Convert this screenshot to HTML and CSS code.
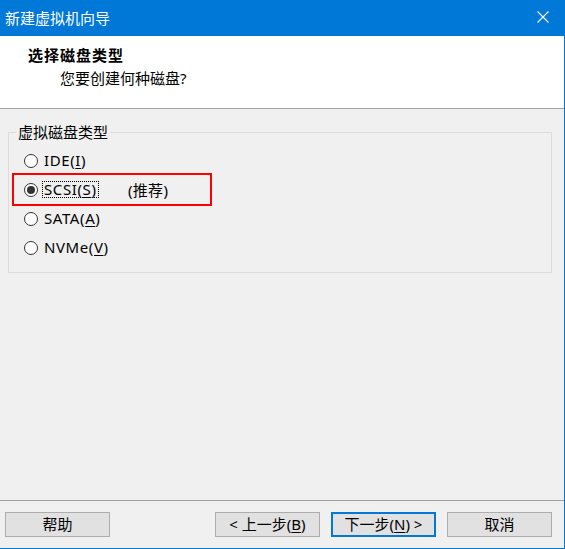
FILE: index.html
```html
<!DOCTYPE html>
<html lang="zh-CN">
<head>
<meta charset="utf-8">
<title>新建虚拟机向导</title>
<link rel="stylesheet" href="styles.css">
</head>
<body>
<div class="window">
  <div class="titlebar">
    <span class="title">新建虚拟机向导</span>
    <svg class="close" width="12" height="12" viewBox="0 0 12 12" aria-hidden="true">
      <path d="M0.5 0.5 L11.5 11.5 M11.5 0.5 L0.5 11.5" stroke="#fff" stroke-width="1.1" fill="none"/>
    </svg>
  </div>
  <div class="header">
    <div class="h-title">选择磁盘类型</div>
    <div class="h-sub">您要创建何种磁盘?</div>
  </div>
  <div class="content">
    <fieldset class="group">
      <legend>虚拟磁盘类型</legend>
      <div class="row">
        <span class="opt"><span class="radio"></span><span class="label">IDE(<u>I</u>)</span></span>
      </div>
      <div class="row row-hl">
        <span class="opt opt-fixed"><span class="radio checked"></span><span class="label focus">SCSI(<u>S</u>)</span></span>
        <span class="rec">(推荐)</span>
        <span class="highlight"></span>
      </div>
      <div class="row">
        <span class="opt"><span class="radio"></span><span class="label">SATA(<u>A</u>)</span></span>
      </div>
      <div class="row">
        <span class="opt"><span class="radio"></span><span class="label">NVMe(<u>V</u>)</span></span>
      </div>
    </fieldset>
  </div>
  <div class="footer">
    <button class="btn">帮助</button>
    <button class="btn btn-back">&lt; 上一步(<u>B</u>)</button>
    <button class="btn btn-primary">下一步(<u>N</u>) &gt;</button>
    <button class="btn">取消</button>
  </div>
</div>
</body>
</html>
```
FILE: styles.css
```css
* { box-sizing: border-box; }
html, body {
  margin: 0;
  padding: 0;
  background: #f0f0f0;
}
body {
  font-family: "Noto Sans", "Noto Sans CJK SC", sans-serif;
  font-size: 15px;
  color: #000;
}
.window {
  width: 565px;
  height: 549px;
  display: flex;
  flex-direction: column;
  background: #f0f0f0;
  border-right: 1px solid #0078d7;
  border-bottom: 1px solid #0078d7;
}
.titlebar {
  height: 36px;
  flex: none;
  background: #0078d7;
  display: flex;
  align-items: flex-start;
  padding-left: 5px;
  padding-right: 15px;
}
.title {
  color: #fff;
  font-size: 15px;
  line-height: 36px;
  flex: 1;
}
.close {
  margin-top: 11px;
  display: block;
}
.header {
  height: 73px;
  flex: none;
  background: #fff;
  border-bottom: 1px solid #a0a0a0;
  padding-top: 9px;
}
.h-title {
  font-weight: bold;
  font-size: 15px;
  line-height: 20px;
  letter-spacing: 1px;
  padding-left: 28px;
}
.h-sub {
  font-size: 15px;
  line-height: 20px;
  margin-top: 3px;
  padding-left: 60px;
}
.content {
  flex: 1;
  padding-top: 13px;
  padding-left: 8px;
}
.group {
  margin: 0;
  width: 544px;
  height: 151px;
  border: 1px solid #dcdcdc;
  padding: 4px 0 0 7px;
  min-width: 0;
}
.group legend {
  padding: 0 2px;
  font-size: 15px;
  line-height: 20px;
}
.row {
  height: 29px;
  display: flex;
  align-items: center;
  position: relative;
  padding-left: 8px;
}
.opt {
  display: flex;
  align-items: center;
}
.opt-fixed {
  width: 104px;
}
.radio {
  width: 14px;
  height: 14px;
  min-width: 14px;
  border-radius: 50%;
  border: 1px solid #333;
  background: #fff;
  flex: none;
  display: flex;
  align-items: center;
  justify-content: center;
}
.radio.checked::after {
  content: "";
  width: 8px;
  height: 8px;
  border-radius: 50%;
  background: #333;
}
.label {
  margin-left: 4px;
  padding: 0 1px;
  border: 1px dotted transparent;
  line-height: 15px;
  letter-spacing: 0.6px;
}
.label.focus {
  border-color: #000;
}
.rec {
  letter-spacing: 0.3px;
}
.highlight {
  position: absolute;
  left: -4px;
  top: -2px;
  width: 200px;
  height: 33px;
  border: 2px solid #f00;
  pointer-events: none;
}
.footer {
  height: 48px;
  flex: none;
  border-top: 1px solid #a0a0a0;
  display: flex;
  align-items: flex-start;
  padding: 11px 12px 0 5px;
  gap: 11px;
}
.btn {
  width: 105px;
  height: 25px;
  background: #e1e1e1;
  border: 1px solid #adadad;
  font-family: "Noto Sans", "Noto Sans CJK SC", sans-serif;
  font-size: 15px;
  color: #000;
  padding: 0;
  line-height: 21px;
  border-radius: 0;
}
.btn-back {
  margin-left: auto;
}
.btn-primary {
  border: 2px solid #0078d7;
  line-height: 19px;
}
u {
  text-decoration-thickness: 1px;
  text-underline-offset: 2px;
}
```
